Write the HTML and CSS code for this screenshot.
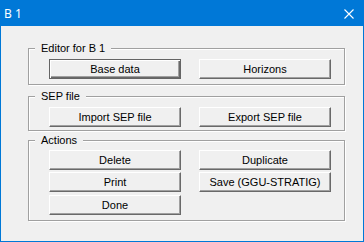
FILE: index.html
```html
<!DOCTYPE html>
<html>
<head>
    <title>B 1</title>
    <link rel="stylesheet" href="styles.css">
</head>
<body>
    <div class="window">
        <div class="titlebar">
            <span class="title">B 1</span>
            <svg class="close" width="10" height="10" viewBox="0 0 10 10">
                <path d="M0.5 0.5 L9.5 9.5 M9.5 0.5 L0.5 9.5" stroke="#fff" stroke-width="1.1" fill="none"/>
            </svg>
        </div>
        <div class="client">
            <div class="group group-editor">
                <span class="legend">Editor for B 1</span>
                <div class="buttons">
                    <button class="btn default">Base data</button>
                    <button class="btn">Horizons</button>
                </div>
            </div>
            <div class="group group-sep">
                <span class="legend">SEP file</span>
                <div class="buttons">
                    <button class="btn">Import SEP file</button>
                    <button class="btn">Export SEP file</button>
                </div>
            </div>
            <div class="group group-actions">
                <span class="legend">Actions</span>
                <div class="buttons actions">
                    <button class="btn">Delete</button>
                    <button class="btn">Duplicate</button>
                    <button class="btn">Print</button>
                    <button class="btn">Save (GGU-STRATIG)</button>
                    <button class="btn done">Done</button>
                </div>
            </div>
        </div>
    </div>
</body>
</html>
```

FILE: styles.css
```css
body {
    margin: 0;
    font-family: "Liberation Sans", Arial, sans-serif;
    font-size: 11px;
    background: #f0f0f0;
}
.window {
    width: 364px;
    height: 242px;
    box-sizing: border-box;
    border: 1px solid #0078d7;
    background: #f0f0f0;
}
.titlebar {
    height: 25px;
    background: #0078d7;
    color: #fff;
    display: flex;
    align-items: center;
    justify-content: space-between;
    padding: 0 9px 0 3px;
    margin-top: -1px;
    padding-top: 1px;
}
.title {
    font-family: "Noto Sans", sans-serif;
    font-size: 12px;
}
.close {
    display: block;
    margin-top: 1px;
}
.client {
    padding: 22px 0 0 27px;
}
.group {
    position: relative;
    width: 317px;
    box-sizing: border-box;
    border: 1px solid #a0a0a0;
    box-shadow: 1px 1px 0 #fff, inset 1px 1px 0 #fff;
}
.legend {
    position: absolute;
    top: -7px;
    left: 6px;
    height: 13px;
    line-height: 13px;
    padding: 0 6px;
    background: #f0f0f0;
    color: #000;
}
.group-editor {
    padding: 10px 0 5px 20px;
}
.group-sep {
    margin-top: 11px;
    padding: 10px 0 3px 20px;
}
.group-actions {
    margin-top: 9px;
    padding: 9px 0 5px 20px;
}
.buttons {
    display: grid;
    grid-template-columns: 132px 132px;
    column-gap: 18px;
    row-gap: 2px;
}
.btn {
    height: 20px;
    margin: 0;
    padding: 0;
    font-family: "Liberation Sans", Arial, sans-serif;
    font-size: 11px;
    color: #000;
    background: #f0f0f0;
    border: 1px solid;
    border-color: #fff #696969 #696969 #fff;
    box-shadow: inset -1px -1px 0 #a0a0a0;
}
.btn.default {
    border-color: #646464;
    box-shadow: inset 1px 1px 0 #fff, inset -1px -1px 0 #696969, inset -2px -2px 0 #a0a0a0;
}
.done {
    margin-top: 1px;
}
```
